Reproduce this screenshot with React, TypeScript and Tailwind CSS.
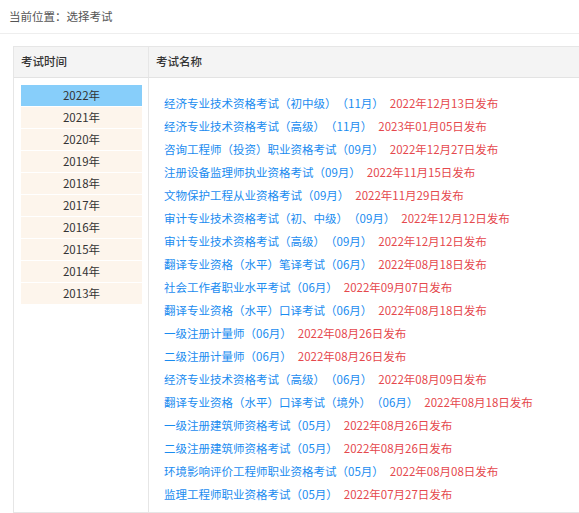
import React, { useState } from "react";

const YEARS = ["2022年", "2021年", "2020年", "2019年", "2018年", "2017年", "2016年", "2015年", "2014年", "2013年"];

const EXAMS = [
  { name: "经济专业技术资格考试（初中级）（11月）", date: "2022年12月13日发布" },
  { name: "经济专业技术资格考试（高级）（11月）", date: "2023年01月05日发布" },
  { name: "咨询工程师（投资）职业资格考试（09月）", date: "2022年12月27日发布" },
  { name: "注册设备监理师执业资格考试（09月）", date: "2022年11月15日发布" },
  { name: "文物保护工程从业资格考试（09月）", date: "2022年11月29日发布" },
  { name: "审计专业技术资格考试（初、中级）（09月）", date: "2022年12月12日发布" },
  { name: "审计专业技术资格考试（高级）（09月）", date: "2022年12月12日发布" },
  { name: "翻译专业资格（水平）笔译考试（06月）", date: "2022年08月18日发布" },
  { name: "社会工作者职业水平考试（06月）", date: "2022年09月07日发布" },
  { name: "翻译专业资格（水平）口译考试（06月）", date: "2022年08月18日发布" },
  { name: "一级注册计量师（06月）", date: "2022年08月26日发布" },
  { name: "二级注册计量师（06月）", date: "2022年08月26日发布" },
  { name: "经济专业技术资格考试（高级）（06月）", date: "2022年08月09日发布" },
  { name: "翻译专业资格（水平）口译考试（境外）（06月）", date: "2022年08月18日发布" },
  { name: "一级注册建筑师资格考试（05月）", date: "2022年08月26日发布" },
  { name: "二级注册建筑师资格考试（05月）", date: "2022年08月26日发布" },
  { name: "环境影响评价工程师职业资格考试（05月）", date: "2022年08月08日发布" },
  { name: "监理工程师职业资格考试（05月）", date: "2022年07月27日发布" },
];

export default function App() {
  const [year, setYear] = useState(0);

  return (
    <div
      className="w-[579px] h-[513px] overflow-hidden bg-white [text-spacing-trim:space-all]"
      style={{ fontFamily: '"Microsoft YaHei", "Noto Sans CJK SC", sans-serif' }}
    >
      {/* breadcrumb */}
      <div className="h-[34px] pl-[9px] pt-[7px] text-[11.5px] leading-[18px] text-[#555] border-b border-[#eeeeee]">
        当前位置：选择考试
      </div>

      <div className="ml-[13px] mt-[12px] w-[620px] border-l border-b border-t border-[#e6e6e6]">
        {/* header */}
        <div className="flex h-[31px] bg-[#f4f4f4] border-b border-[#e3e3e3] text-[11.5px] text-[#333] font-medium">
          <div className="w-[135px] shrink-0 border-r border-[#e6e6e6] pl-[7px] flex items-center">考试时间</div>
          <div className="flex-1 pl-[7px] flex items-center">考试名称</div>
        </div>

        <div className="flex h-[434px]">
          <div className="w-[135px] shrink-0 border-r border-[#e6e6e6] pl-[7px] pr-[6px] pt-[7px]">
            <div className="flex flex-col gap-px">
              {YEARS.map((y, i) => (
                <div
                  key={y}
                  onClick={() => setYear(i)}
                  className={
                    "h-[21px] flex items-center justify-center text-[11.5px] text-[#333] cursor-pointer " +
                    (year === i ? "bg-[#87cefa]" : "bg-[#fdf5ec]")
                  }
                >
                  {y}
                </div>
              ))}
            </div>
          </div>

          <div className="flex-1 pl-[15px] pt-[14px]">
            {EXAMS.map((e) => (
              <div key={e.name + e.date} className="h-[23px] flex items-center text-[11.5px] whitespace-nowrap">
                <span className="text-[#1a8cf0] cursor-pointer">{e.name}</span>
                <span className="ml-[6px] text-[#e5484d]">{e.date}</span>
              </div>
            ))}
          </div>
        </div>
      </div>
    </div>
  );
}
